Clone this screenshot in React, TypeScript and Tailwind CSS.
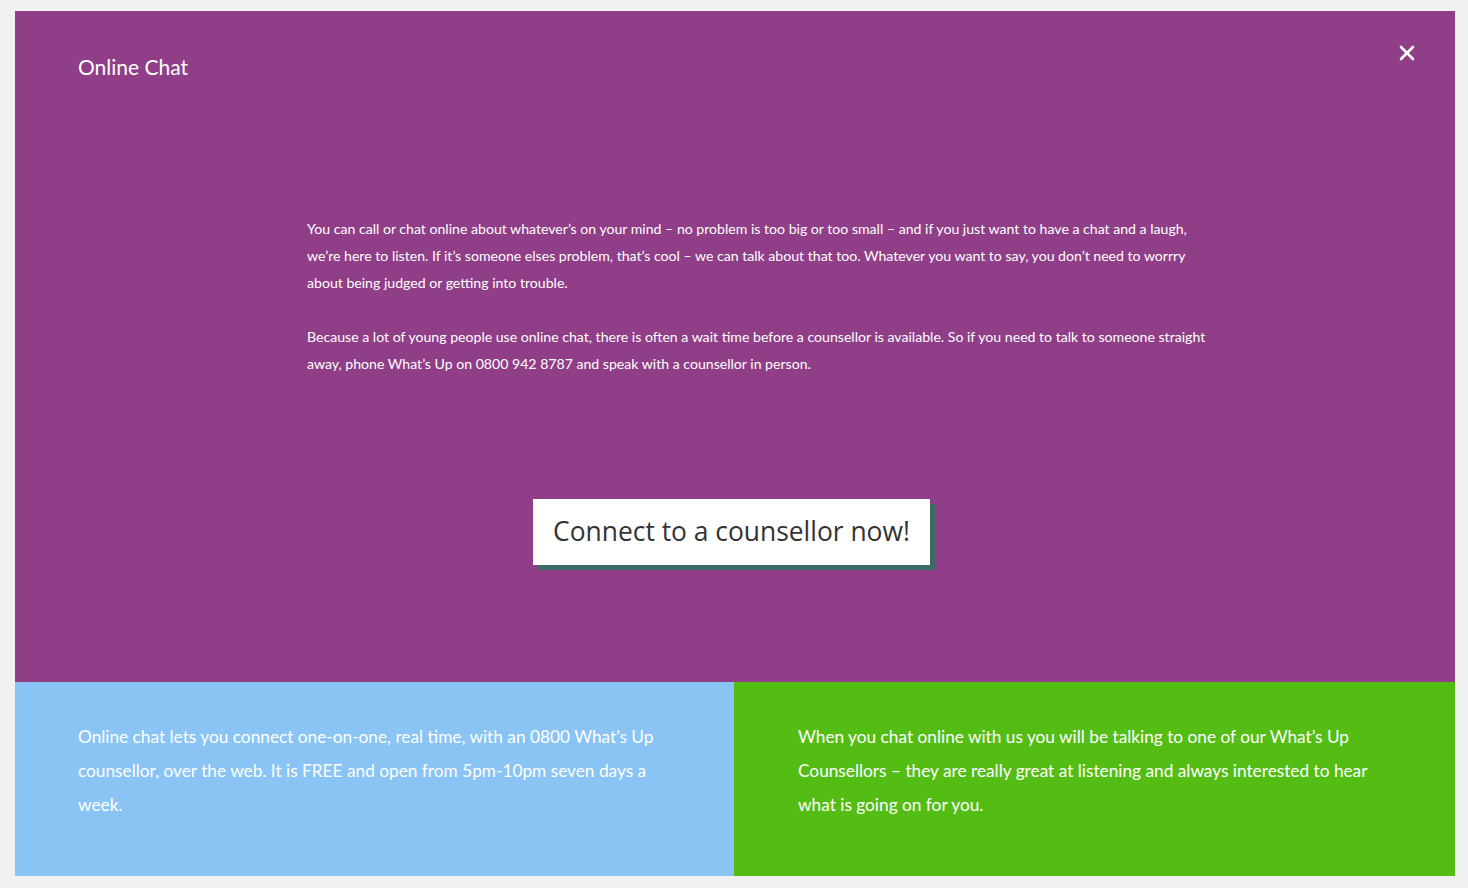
import { X } from "lucide-react";

// Modal de chat online com painéis informativos
export default function App() {
  return (
    <div className="min-h-screen bg-[#f1f1f1] pt-[11px] pl-[15px] pr-[13px] pb-[12px] font-['Lato',sans-serif]">
      <div className="flex flex-col">
        {/* Bloco roxo principal */}
        <div className="relative h-[671px] bg-[#913e88] text-white">
          <button type="button" className="absolute right-[36px] top-[30px]">
            <X className="size-[24px] text-white" strokeWidth={2.6} />
          </button>
          <h1 className="pl-[63px] pt-[43px] text-[21px] leading-[26px]">Online Chat</h1>

          <div className="ml-[292px] mt-[135px] w-[905px] text-[14.1px] leading-[27px] space-y-[27px]">
            <p>
              You can call or chat online about whatever’s on your mind – no problem is too big or too small – and if you just want to have a chat and a laugh, we’re here to listen. If it’s someone elses problem, that’s cool – we can talk about that too. Whatever you want to say, you don’t need to worrry about being judged or getting into trouble.
            </p>
            <p>
              Because a lot of young people use online chat, there is often a wait time before a counsellor is available. So if you need to talk to someone straight away, phone What’s Up on 0800 942 8787 and speak with a counsellor in person.
            </p>
          </div>

          <div className="mt-[122px] flex justify-center pr-[7px]">
            <button
              type="button"
              className="h-[66px] w-[397px] bg-white text-[#333] text-[26.4px] font-['Open_Sans',sans-serif] shadow-[5px_5px_0_#3c6b66]"
            >
              Connect to a counsellor now!
            </button>
          </div>
        </div>

        {/* Painéis inferiores */}
        <div className="flex h-[194px] text-white text-[17.25px] leading-[34px]">
          <div className="w-[719px] bg-[#89c4f4] pl-[63px] pr-[60px] pt-[38px]">
            <p>
              Online chat lets you connect one-on-one, real time, with an 0800 What’s Up counsellor, over the web. It is FREE and open from 5pm-10pm seven days a week.
            </p>
          </div>
          <div className="flex-1 bg-[#54bd14] pl-[64px] pr-[60px] pt-[38px]">
            <p>
              When you chat online with us you will be talking to one of our What’s Up Counsellors – they are really great at listening and always interested to hear what is going on for you.
            </p>
          </div>
        </div>
      </div>
    </div>
  );
}
